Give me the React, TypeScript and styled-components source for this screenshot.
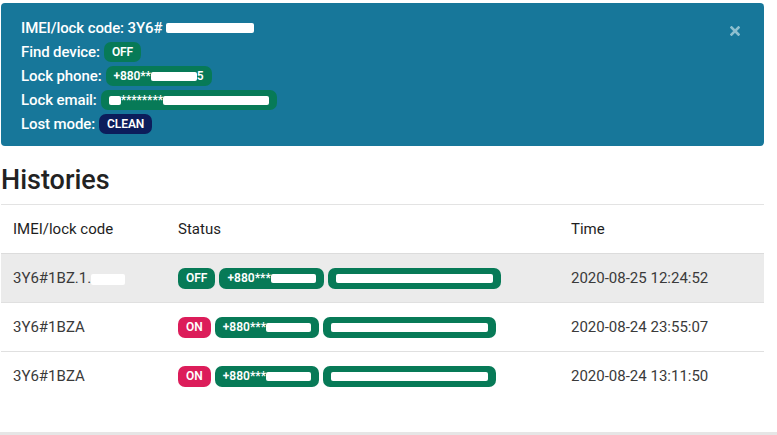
import { FC, PropsWithChildren } from 'react';
import styled, { createGlobalStyle, css } from 'styled-components';

const GlobalStyle = createGlobalStyle`
	body {
		margin: 0;
		background: #fff;
		font-family: Roboto, 'Liberation Sans', sans-serif;
		color: #333;
	}
`;

const teal = '#17779a';
const green = '#077a57';
const red = '#dc1d5a';
const navy = '#0c1d5b';

const Page = styled.div`
	width: 763px;
	margin-left: 1px;
	padding-top: 3px;
`;

const Alert = styled.div`
	position: relative;
	background: ${teal};
	border-radius: 4px;
	height: 143px;
	box-sizing: border-box;
	padding: 15px 20px 0;
	color: #fff;
	display: flex;
	flex-direction: column;
	gap: 4px;
`;

const Close = styled.button`
	position: absolute;
	top: 21px;
	right: 22px;
	width: 14px;
	height: 14px;
	padding: 0;
	border: 0;
	background: none;
	display: flex;
	align-items: center;
	justify-content: center;
`;

const InfoLine = styled.div`
	display: flex;
	align-items: center;
	gap: 4px;
	height: 20px;
	font-size: 15px;
	font-weight: 500;
	letter-spacing: -0.1px;
`;

type Tone = 'green' | 'red' | 'navy';

const toneStyles = (tone: Tone) => {
	if (tone === 'red') return css`background: ${red};`;
	if (tone === 'navy') return css`background: ${navy};`;
	return css`background: ${green};`;
};

const Badge = styled.span<{ $tone?: Tone; $tall?: boolean }>`
	display: inline-flex;
	align-items: center;
	height: ${(p) => (p.$tall ? 21 : 20)}px;
	padding: 0 8px;
	border-radius: 7px;
	font-size: 12px;
	font-weight: 600;
	color: #fff;
	white-space: nowrap;
	${(p) => toneStyles(p.$tone ?? 'green')}
`;

// white scribble used to hide private digits
const Redacted = styled.span<{ $w: number; $h?: number }>`
	display: inline-block;
	width: ${(p) => p.$w}px;
	height: ${(p) => p.$h ?? 9}px;
	background: #fff;
	border-radius: 2px;
	vertical-align: middle;
	filter: blur(0.4px);
`;

const Heading = styled.h2`
	margin: 18px 0 8px;
	font-size: 27px;
	font-weight: 500;
	color: #222;
	line-height: 32px;
`;

const Table = styled.table`
	width: 100%;
	border-collapse: collapse;
	font-size: 15px;
`;

const Th = styled.th`
	text-align: left;
	font-weight: 400;
	color: #1e1e1e;
	height: 48px;
	padding: 0 12px;
	border-top: 1px solid #e3e3e3;
	border-bottom: 1px solid #dcdcdc;
`;

const Row = styled.tr<{ $shaded?: boolean }>`
	height: 49px;
	background: ${(p) => (p.$shaded ? '#ebebeb' : '#fff')};
	border-bottom: 1px solid #e0e0e0;
	&:last-child {
		border-bottom: 0;
	}
`;

const Td = styled.td`
	padding: 0 12px;
	color: #3a3a3a;
	white-space: nowrap;
`;

const BadgeGroup = styled.div`
	display: flex;
	gap: 4px;
	align-items: center;
`;

const Footer = styled.div`
	position: fixed;
	left: 0;
	right: 0;
	top: 432px;
	height: 3px;
	background: #e6e6e6;
`;

const Label: FC<PropsWithChildren> = ({ children }) => <span>{children}</span>;

const CloseIcon = () => (
	<svg width="10" height="10" viewBox="0 0 10 10">
		<path d="M1.5 1.5 L8.5 8.5 M8.5 1.5 L1.5 8.5" stroke="#8dbfcf" strokeWidth="2.6" strokeLinecap="square" />
	</svg>
);

type History = {
	code: string;
	hidden: number;
	on: boolean;
	time: string;
	shaded?: boolean;
};

const histories: History[] = [
	{ code: '3Y6#1BZ.1.', hidden: 34, on: false, time: '2020-08-25 12:24:52', shaded: true },
	{ code: '3Y6#1BZA', hidden: 30, on: true, time: '2020-08-24 23:55:07' },
	{ code: '3Y6#1BZA', hidden: 26, on: true, time: '2020-08-24 13:11:50' },
];

export default function App() {
	return (
		<>
			<GlobalStyle />
			<Page>
				<Alert>
					<Close aria-label="close">
						<CloseIcon />
					</Close>
					<InfoLine>
						<Label>IMEI/lock code: 3Y6#</Label>
						<Redacted $w={88} $h={10} />
					</InfoLine>
					<InfoLine>
						<Label>Find device:</Label>
						<Badge>OFF</Badge>
					</InfoLine>
					<InfoLine>
						<Label>Lock phone:</Label>
						<Badge>
							+880**
							<Redacted $w={46} />
							5
						</Badge>
					</InfoLine>
					<InfoLine>
						<Label>Lock email:</Label>
						<Badge>
							<Redacted $w={12} />
							********
							<Redacted $w={106} />
						</Badge>
					</InfoLine>
					<InfoLine>
						<Label>Lost mode:</Label>
						<Badge $tone="navy">CLEAN</Badge>
					</InfoLine>
				</Alert>

				<Heading>Histories</Heading>

				<Table>
					<colgroup>
						<col style={{ width: 165 }} />
						<col style={{ width: 393 }} />
						<col />
					</colgroup>
					<thead>
						<tr>
							<Th>IMEI/lock code</Th>
							<Th>Status</Th>
							<Th>Time</Th>
						</tr>
					</thead>
					<tbody>
						{histories.map((h) => (
							<Row key={h.time} $shaded={h.shaded}>
								<Td>
									{h.code}
									<Redacted $w={h.hidden} $h={11} />
								</Td>
								<Td>
									<BadgeGroup>
										<Badge $tall $tone={h.on ? 'red' : 'green'}>{h.on ? 'ON' : 'OFF'}</Badge>
										<Badge $tall>
											+880***
											<Redacted $w={45} />
										</Badge>
										<Badge $tall>
											<Redacted $w={157} />
										</Badge>
									</BadgeGroup>
								</Td>
								<Td>{h.time}</Td>
							</Row>
						))}
					</tbody>
				</Table>
			</Page>
			<Footer />
		</>
	);
}
